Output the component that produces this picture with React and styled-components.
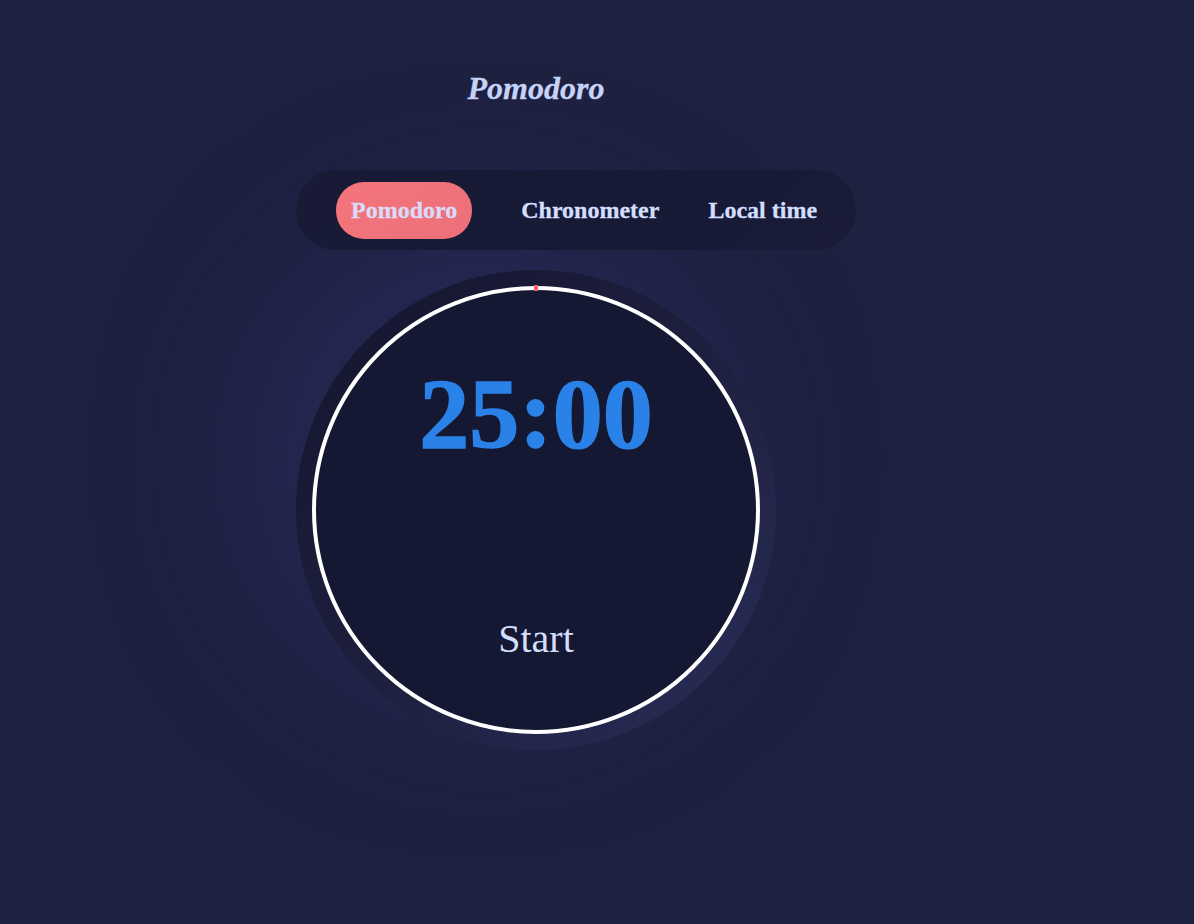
import React, { useState } from "react";
import styled, { createGlobalStyle } from "styled-components";

const GlobalStyle = createGlobalStyle`
    html, body {
        margin: 0;
        padding: 0;
        background: #1e2140;
        min-height: 100%;
    }
    body {
        font-family: "Liberation Serif", "Times New Roman", serif;
    }
`;

const Page = styled.div`
    min-height: 924px;
    box-sizing: border-box;
    padding: 70px 0 0 296px;
    display: flex;
    flex-direction: column;
    align-items: flex-start;
`;

const Title = styled.h1`
    width: 480px;
    margin: 0;
    text-align: center;
    font-size: 32px;
    font-style: italic;
    font-weight: bold;
    line-height: normal;
    color: #c8d5fb;
    -webkit-text-stroke: 0.3px #c8d5fb;
`;

const Nav = styled.nav`
    position: relative;
    z-index: 1;
    width: 560px;
    height: 80px;
    box-sizing: border-box;
    margin-top: 63px;
    padding: 0 40px;
    display: flex;
    align-items: center;
    gap: 19px;
    border-radius: 40px;
    background: linear-gradient(135deg, #181a36, #171a35 60%, #191b38);
`;

const Tab = styled.button`
    appearance: none;
    flex-shrink: 0;
    white-space: nowrap;
    border: none;
    outline: none;
    cursor: pointer;
    padding: 15px;
    border-radius: 28px;
    font-family: inherit;
    font-size: 24px;
    font-weight: bold;
    line-height: normal;
    color: ${(p) => (p.$active ? "#d9dbf8" : "#d3dffe")};
    -webkit-text-stroke: 0.3px ${(p) => (p.$active ? "#d9dbf8" : "#d3dffe")};
    background: ${(p) =>
        p.$active ? "linear-gradient(135deg, #f4757a, #ec6f7b)" : "transparent"};

    &:first-child {
        margin-right: 15px;
    }
`;

const Dial = styled.div`
    margin-top: 20px;
    width: 480px;
    height: 480px;
    border-radius: 50%;
    display: flex;
    align-items: center;
    justify-content: center;
    background: linear-gradient(135deg, #14162e 0%, #1c1e3c 45%, #2a2d58 100%);
    box-shadow: -50px -50px 130px 10px rgba(44, 46, 100, 0.5);
`;

const Face = styled.div`
    position: relative;
    width: 448px;
    height: 448px;
    box-sizing: border-box;
    border-radius: 50%;
    border: 4px solid #ffffff;
    background: #151833;
    display: flex;
    flex-direction: column;
    align-items: center;
    padding-top: 66px;

    &::before {
        content: "";
        position: absolute;
        top: -5px;
        left: calc(50% - 2px);
        width: 4px;
        height: 6px;
        background: #f2646f;
    }
`;

const Time = styled.div`
    font-size: 100px;
    font-weight: bold;
    line-height: normal;
    color: #2a82e8;
    -webkit-text-stroke: 1.5px #2a82e8;
`;

const StartButton = styled.button`
    margin-top: 144px;
    border: none;
    background: transparent;
    cursor: pointer;
    padding: 0;
    font-family: inherit;
    font-size: 40px;
    line-height: normal;
    color: #d3defc;
`;

const tabs = ["Pomodoro", "Chronometer", "Local time"];

export default function App() {
    const [active, setActive] = useState("Pomodoro");

    return (
        <>
            <GlobalStyle />
            <Page>
                <Title>Pomodoro</Title>
                <Nav>
                    {tabs.map((t) => (
                        <Tab key={t} $active={t === active} onClick={() => setActive(t)}>
                            {t}
                        </Tab>
                    ))}
                </Nav>
                <Dial>
                    <Face>
                        <Time>25:00</Time>
                        <StartButton>Start</StartButton>
                    </Face>
                </Dial>
            </Page>
        </>
    );
}
